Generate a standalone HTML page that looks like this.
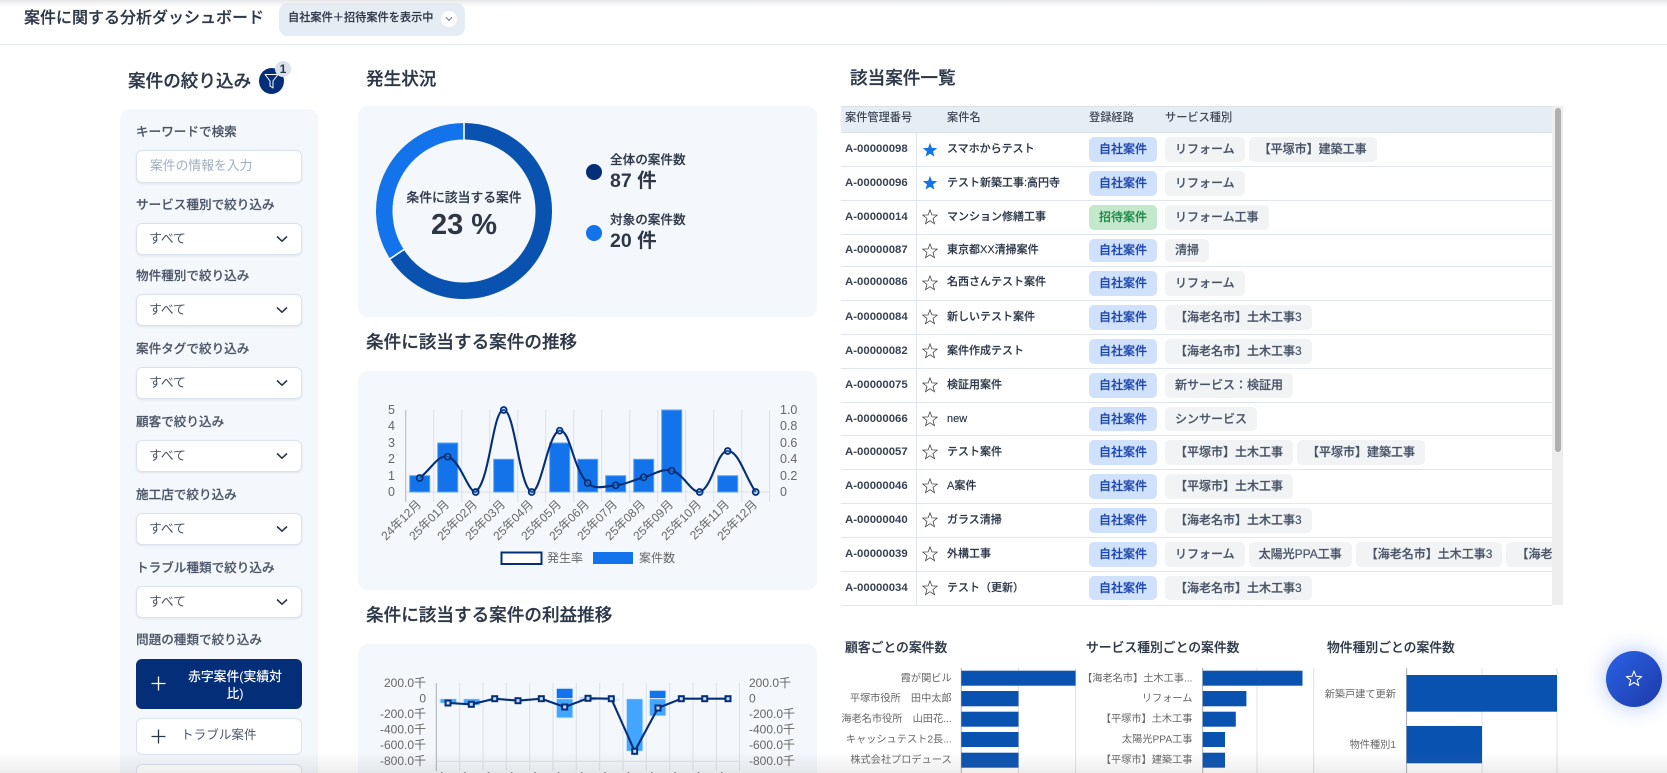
<!DOCTYPE html>
<html lang="ja"><head><meta charset="utf-8"><title>案件に関する分析ダッシュボード</title>
<style>
*{box-sizing:border-box}
html,body{margin:0;padding:0;background:#fff;width:1667px;height:773px;overflow:hidden}
body{font-family:"Liberation Sans","Noto Sans CJK JP",sans-serif;color:#2d3748}
#w{position:relative;width:1667px;height:773px;overflow:hidden;background:#fff}
.t{position:absolute;white-space:nowrap;line-height:1}
.b{position:absolute}
.h2{font-size:17.6px;font-weight:500;color:#2d3748;-webkit-text-stroke:.25px #2d3748}
.lab{font-size:12.6px;font-weight:500;color:#4a5568;left:136px;-webkit-text-stroke:.15px #4a5568}
.panel{position:absolute;background:#f4f7fb;border-radius:10px}
.sel{position:absolute;left:136px;width:166px;height:32px;background:#fff;border:1px solid #dbe3ee;border-radius:6px;box-shadow:0 1px 2px rgba(0,0,0,.08);font-size:12.8px;color:#4a5568;line-height:30px;padding-left:12px}
.sel svg{position:absolute;left:139px;top:11px}
.row{position:absolute;left:0;width:711px;border-bottom:1.2px solid #dfe6f0}
.id{position:absolute;left:4px;top:11px;font-size:11.4px;font-weight:700;color:#3a4454;line-height:1;white-space:nowrap}
.nm{position:absolute;left:106px;top:11px;font-size:11px;font-weight:500;color:#2d3748;line-height:1;white-space:nowrap;-webkit-text-stroke:.15px #2d3748}
.st{position:absolute;left:81px;top:8px;width:16px;height:16px}
.tags{position:absolute;left:248px;top:4px;display:flex;gap:8px;white-space:nowrap}
.bd{display:block;font-size:12px;padding:0 10px;border-radius:5px;font-weight:500;flex:none;height:25px;line-height:25px}
.self{background:#d0e2fb;color:#1f47ad;-webkit-text-stroke:.2px #1f47ad}
.inv{background:#c3e8cc;color:#1f8a4c;-webkit-text-stroke:.2px #1f8a4c}
.tg{background:#f1f3f5;color:#4a5568;margin-right:-4px;-webkit-text-stroke:.2px #4a5568}
.h23{height:23px;line-height:23px}
.h24{height:24px;line-height:24px}
</style></head><body><div id="w">

<div class="b" style="left:0;top:44px;width:1667px;height:1px;background:#e5eaf0"></div>
<div class="t" style="left:24px;top:11px;font-size:16px;font-weight:500;color:#2d3748;-webkit-text-stroke:.2px #2d3748">案件に関する分析ダッシュボード</div>
<div class="b" style="left:279px;top:3px;width:186px;height:33px;background:#e6ecf3;border-radius:9px"></div>
<div class="t" style="left:288px;top:13px;font-size:11.2px;font-weight:500;color:#2d3748;-webkit-text-stroke:.15px #2d3748">自社案件＋招待案件を表示中</div>
<div class="b" style="left:441px;top:11px;width:16px;height:16px;border-radius:50%;background:#fff"></div>
<svg class="b" style="left:445px;top:16px" width="8" height="6" viewBox="0 0 8 6"><path d="M1 1.2 4 4.4 7 1.2" fill="none" stroke="#718096" stroke-width="1.1"/></svg>

<div class="t h2" style="left:128px;top:73px">案件の絞り込み</div>
<div class="b" style="left:259px;top:68px;width:25px;height:26px;border-radius:50%;background:#042f78"></div>
<svg class="b" style="left:262px;top:73px" width="19" height="17" viewBox="0 0 19 17"><path d="M3 1.5H16L11 8V15L8 13V8Z" fill="none" stroke="#fff" stroke-width="1" stroke-linejoin="round"/></svg>
<div class="b" style="left:275px;top:61px;width:16px;height:16px;border-radius:50%;background:#dbe2ec;text-align:center;font-size:12px;font-weight:700;line-height:16px;color:#2d3748">1</div>
<div class="t h2" style="left:366px;top:71px">発生状況</div>
<div class="t h2" style="left:850px;top:70px">該当案件一覧</div>
<div class="t h2" style="left:366px;top:334px">条件に該当する案件の推移</div>
<div class="t h2" style="left:366px;top:607px">条件に該当する案件の利益推移</div>

<div class="panel" style="left:120px;top:109px;width:198px;height:664px;border-radius:10px 10px 0 0"></div>
<div class="t lab" style="top:126px">キーワードで検索</div>
<div class="sel" style="top:150px;height:33px;color:#a0aec0;padding-left:13px">案件の情報を入力</div>
<div class="t lab" style="top:199px">サービス種別で絞り込み</div>
<div class="sel" style="top:223px">すべて<svg width="12" height="8" viewBox="0 0 12 8"><path d="M1 1.5 6 6.2 11 1.5" fill="none" stroke="#2d3748" stroke-width="1.6"/></svg></div>
<div class="t lab" style="top:270px">物件種別で絞り込み</div>
<div class="sel" style="top:294px">すべて<svg width="12" height="8" viewBox="0 0 12 8"><path d="M1 1.5 6 6.2 11 1.5" fill="none" stroke="#2d3748" stroke-width="1.6"/></svg></div>
<div class="t lab" style="top:343px">案件タグで絞り込み</div>
<div class="sel" style="top:367px">すべて<svg width="12" height="8" viewBox="0 0 12 8"><path d="M1 1.5 6 6.2 11 1.5" fill="none" stroke="#2d3748" stroke-width="1.6"/></svg></div>
<div class="t lab" style="top:416px">顧客で絞り込み</div>
<div class="sel" style="top:440px">すべて<svg width="12" height="8" viewBox="0 0 12 8"><path d="M1 1.5 6 6.2 11 1.5" fill="none" stroke="#2d3748" stroke-width="1.6"/></svg></div>
<div class="t lab" style="top:489px">施工店で絞り込み</div>
<div class="sel" style="top:513px">すべて<svg width="12" height="8" viewBox="0 0 12 8"><path d="M1 1.5 6 6.2 11 1.5" fill="none" stroke="#2d3748" stroke-width="1.6"/></svg></div>
<div class="t lab" style="top:562px">トラブル種類で絞り込み</div>
<div class="sel" style="top:586px">すべて<svg width="12" height="8" viewBox="0 0 12 8"><path d="M1 1.5 6 6.2 11 1.5" fill="none" stroke="#2d3748" stroke-width="1.6"/></svg></div>
<div class="t lab" style="top:634px">問題の種類で絞り込み</div>
<div class="b" style="left:136px;top:659px;width:166px;height:50px;background:#042f78;border-radius:6px"></div>
<div class="t" style="left:177px;top:669px;width:116px;text-align:center;font-size:12.8px;font-weight:500;color:#fff;line-height:16.5px">赤字案件(実績対<br>比)</div>
<svg class="b" style="left:151px;top:676px" width="15" height="15" viewBox="0 0 15 15"><path d="M7.5 .5V14.5M.5 7.5H14.5" stroke="#fff" stroke-width="1.3"/></svg>
<div class="b" style="left:136px;top:718px;width:166px;height:37px;background:#fff;border:1px solid #dbe3ee;border-radius:6px"></div>
<div class="t" style="left:181px;top:729px;font-size:12.6px;color:#4a5568">トラブル案件</div>
<svg class="b" style="left:151px;top:729px" width="15" height="15" viewBox="0 0 15 15"><path d="M7.5 .5V14.5M.5 7.5H14.5" stroke="#2d3748" stroke-width="1.3"/></svg>
<div class="b" style="left:136px;top:764px;width:166px;height:9px;background:#fff;border:1px solid #dbe3ee;border-bottom:0;border-radius:6px 6px 0 0"></div>

<div class="panel" style="left:358px;top:106px;width:459px;height:211px"></div>
<div class="panel" style="left:358px;top:371px;width:459px;height:219px"></div>
<div class="panel" style="left:358px;top:644px;width:459px;height:129px;border-radius:10px 10px 0 0"></div>

<svg class="b" style="left:0;top:0;overflow:hidden" width="1667" height="773" viewBox="0 0 1667 773" font-family="'Liberation Sans','Noto Sans CJK JP',sans-serif">
<!-- donut -->
<path d="M464 131.25A79.75 79.75 0 1 1 397.1 254.4" fill="none" stroke="#0a52b0" stroke-width="16.5"/>
<path d="M397.1 254.4A79.75 79.75 0 0 1 464 131.25" fill="none" stroke="#1273eb" stroke-width="16.5"/>
<path d="M464 121V142M405.5 248.5 389 259.5" stroke="#fff" stroke-width="1.6"/>
<circle cx="594" cy="172" r="8" fill="#042f78"/><circle cx="594" cy="233" r="8" fill="#1273eb"/>

<!-- trend chart -->
<g stroke="#dcdfe3" stroke-width="1">
<path d="M405.7 410V502M433.7 410V502M461.7 410V502M489.7 410V502M517.7 410V502M545.7 410V502M573.7 410V502M601.7 410V502M629.7 410V502M657.7 410V502M685.7 410V502M713.7 410V502M741.7 410V502M769.5 410V502M405.7 492H769.5" fill="none"/>
</g>
<path d="M405.7 410V502" stroke="#b8bcc2"/>
<g fill="#1273eb" stroke="#5aa5f5" stroke-width="1">
<rect x="409.7" y="475.7" width="20" height="16.3"/><rect x="437.7" y="443" width="20" height="49"/>
<rect x="493.7" y="459.3" width="20" height="32.7"/><rect x="549.7" y="443" width="20" height="49"/>
<rect x="577.7" y="459.3" width="20" height="32.7"/><rect x="605.7" y="475.7" width="20" height="16.3"/>
<rect x="633.7" y="459.3" width="20" height="32.7"/><rect x="661.7" y="410" width="20" height="82"/>
<rect x="717.7" y="475.7" width="20" height="16.3"/>
</g>
<path d="M419.7 478C430.9 469.5 437.9 454.25 447.7 456.7C460.3 459.85 468 492 475.7 492C490.4 479.7 492.5 410 503.7 410C514.9 410 519.1 487.3 531.7 492C541.5 492 547.8 432.6 559.7 430.7C570.2 429 572.5 468.2 587.7 483C594.9 490 604.7 486.4 615.7 485.3C627.1 484.1 632.5 480.2 643.7 477.3C654.9 474.4 661.6 468 671.7 470.7C684 473.9 690.4 492 699.7 492C712.8 487.4 716.5 451 727.7 451C738.9 451 744.5 475.6 755.7 492" fill="none" stroke="#042f78" stroke-width="2.1"/>
<g fill="rgba(90,165,245,.35)" stroke="#042f78" stroke-width="1.7">
<circle cx="419.7" cy="478" r="3"/><circle cx="447.7" cy="456.7" r="3"/><circle cx="475.7" cy="492" r="3"/><circle cx="503.7" cy="410" r="3"/><circle cx="531.7" cy="492" r="3"/><circle cx="559.7" cy="430.7" r="3"/><circle cx="587.7" cy="483" r="3"/><circle cx="615.7" cy="485.3" r="3"/><circle cx="643.7" cy="477.3" r="3"/><circle cx="671.7" cy="470.7" r="3"/><circle cx="699.7" cy="492" r="3"/><circle cx="727.7" cy="451" r="3"/><circle cx="755.7" cy="492" r="3"/>
</g>
<g font-size="12.5" fill="#666" text-anchor="end">
<text x="395" y="496">0</text><text x="395" y="480">1</text><text x="395" y="463">2</text><text x="395" y="447">3</text><text x="395" y="430">4</text><text x="395" y="414">5</text>
</g>
<g font-size="12.5" fill="#666">
<text x="780" y="496">0</text><text x="780" y="480">0.2</text><text x="780" y="463">0.4</text><text x="780" y="447">0.6</text><text x="780" y="430">0.8</text><text x="780" y="414">1.0</text>
</g>
<g font-size="12" fill="#666" text-anchor="end">
<text transform="rotate(-45 422 505)" x="422" y="505">24年12月</text>
<text transform="rotate(-45 450 505)" x="450" y="505">25年01月</text>
<text transform="rotate(-45 478 505)" x="478" y="505">25年02月</text>
<text transform="rotate(-45 506 505)" x="506" y="505">25年03月</text>
<text transform="rotate(-45 534 505)" x="534" y="505">25年04月</text>
<text transform="rotate(-45 562 505)" x="562" y="505">25年05月</text>
<text transform="rotate(-45 590 505)" x="590" y="505">25年06月</text>
<text transform="rotate(-45 618 505)" x="618" y="505">25年07月</text>
<text transform="rotate(-45 646 505)" x="646" y="505">25年08月</text>
<text transform="rotate(-45 674 505)" x="674" y="505">25年09月</text>
<text transform="rotate(-45 702 505)" x="702" y="505">25年10月</text>
<text transform="rotate(-45 730 505)" x="730" y="505">25年11月</text>
<text transform="rotate(-45 758 505)" x="758" y="505">25年12月</text>
</g>
<rect x="501.5" y="552.5" width="40" height="11.5" fill="#fff" stroke="#042f78" stroke-width="2"/>
<text x="547" y="562" font-size="12" fill="#666">発生率</text>
<rect x="593" y="552" width="40" height="12" fill="#1273eb"/>
<text x="639" y="562" font-size="12" fill="#666">案件数</text>

<!-- profit chart -->
<path d="M436.3 683V771M459.7 683V771M483 683V771M506.3 683V771M529.7 683V771M553 683V771M576.3 683V771M599.7 683V771M623 683V771M646.3 683V771M669.7 683V771M693 683V771M716.3 683V771M739.5 683V771M436.3 761.3H739.5" stroke="#dcdfe3" fill="none"/>
<path d="M436.3 683V771" stroke="#b0b4ba" fill="none"/>
<g stroke="#dceeff" stroke-width="1">
<rect x="440" y="698.7" width="16.7" height="4.6" fill="#42a5ff"/>
<rect x="463.3" y="698.7" width="16.7" height="6.6" fill="#42a5ff"/>
<rect x="486.7" y="698.7" width="16.7" height=".8" fill="#42a5ff"/>
<rect x="510" y="698.7" width="16.7" height="1.2" fill="#42a5ff"/>
<rect x="556.3" y="688.3" width="16.7" height="10.4" fill="#1273eb"/>
<rect x="556.3" y="698.7" width="16.7" height="19.3" fill="#42a5ff"/>
<rect x="579.3" y="697.3" width="16.7" height="1.4" fill="#1273eb"/>
<rect x="579.3" y="698.7" width="16.7" height="1.6" fill="#42a5ff"/>
<rect x="602.7" y="698.7" width="16.7" height="1.6" fill="#cfe6ff"/>
<rect x="626.3" y="698.7" width="16.7" height="52.6" fill="#42a5ff"/>
<rect x="649.3" y="690.3" width="16.7" height="8.4" fill="#1273eb"/>
<rect x="649.3" y="698.7" width="16.7" height="17.3" fill="#42a5ff"/>
</g>
<path d="M448 703L471.3 704.3L494.7 698.7L518 700.7L541.3 698.7L564.7 707L588 698.3L611.3 698.7L634.7 751.3L658 708L681.3 698.7L704.7 698.7L728 698.7" fill="none" stroke="#042f78" stroke-width="2.1"/>
<g fill="#c8dcf2" stroke="#042f78" stroke-width="2">
<rect x="445.5" y="700.5" width="5" height="5"/><rect x="468.8" y="701.8" width="5" height="5"/><rect x="492.2" y="696.2" width="5" height="5"/><rect x="515.5" y="698.2" width="5" height="5"/><rect x="538.8" y="696.2" width="5" height="5"/><rect x="562.2" y="704.5" width="5" height="5"/><rect x="585.5" y="695.8" width="5" height="5"/><rect x="608.8" y="696.2" width="5" height="5"/><rect x="632.2" y="748.8" width="5" height="5"/><rect x="655.5" y="705.5" width="5" height="5"/><rect x="678.8" y="696.2" width="5" height="5"/><rect x="702.2" y="696.2" width="5" height="5"/><rect x="725.5" y="696.2" width="5" height="5"/>
</g>
<g font-size="12" fill="#666" text-anchor="end">
<text x="426" y="687">200.0千</text><text x="426" y="702.5">0</text><text x="426" y="718">-200.0千</text><text x="426" y="733.5">-400.0千</text><text x="426" y="749">-600.0千</text><text x="426" y="765">-800.0千</text>
</g>
<g font-size="12" fill="#666">
<text x="749" y="687">200.0千</text><text x="749" y="702.5">0</text><text x="749" y="718">-200.0千</text><text x="749" y="733.5">-400.0千</text><text x="749" y="749">-600.0千</text><text x="749" y="765">-800.0千</text>
</g>
<g font-size="12" fill="#666" text-anchor="end">
<text transform="rotate(-45 450 777)" x="450" y="777">24年12月</text>
<text transform="rotate(-45 473.3 777)" x="473.3" y="777">25年01月</text>
<text transform="rotate(-45 496.7 777)" x="496.7" y="777">25年02月</text>
<text transform="rotate(-45 520 777)" x="520" y="777">25年03月</text>
<text transform="rotate(-45 543.3 777)" x="543.3" y="777">25年04月</text>
<text transform="rotate(-45 566.7 777)" x="566.7" y="777">25年05月</text>
<text transform="rotate(-45 590 777)" x="590" y="777">25年06月</text>
<text transform="rotate(-45 613.3 777)" x="613.3" y="777">25年07月</text>
<text transform="rotate(-45 636.7 777)" x="636.7" y="777">25年08月</text>
<text transform="rotate(-45 660 777)" x="660" y="777">25年09月</text>
<text transform="rotate(-45 683.3 777)" x="683.3" y="777">25年10月</text>
<text transform="rotate(-45 706.7 777)" x="706.7" y="777">25年11月</text>
<text transform="rotate(-45 730 777)" x="730" y="777">25年12月</text>
</g>

<!-- bottom bar charts -->
<path d="M1018.5 668V773M1075.6 668V773M1257 668V773M1313.7 668V773M1482 668V773M1557 668V773" stroke="#dde0e4" fill="none"/>
<path d="M961.3 668V773M1202.7 668V773M1406.6 668V773" stroke="#a8acb2" fill="none"/>
<g fill="#0a52b0">
<rect x="961.3" y="670.7" width="114.3" height="15"/><rect x="961.3" y="691" width="57.2" height="15.3"/><rect x="961.3" y="711.7" width="57.2" height="15"/><rect x="961.3" y="732" width="57.2" height="15"/><rect x="961.3" y="752.7" width="57.2" height="15"/>
<rect x="1202.7" y="670.7" width="99.8" height="15"/><rect x="1202.7" y="691" width="43.7" height="15.3"/><rect x="1202.7" y="711.7" width="33.1" height="15"/><rect x="1202.7" y="732" width="22.3" height="15"/><rect x="1202.7" y="752.7" width="22.3" height="15"/>
<rect x="1406.6" y="675" width="150.4" height="36.7"/><rect x="1406.6" y="726" width="75.4" height="37.3"/>
</g>
<g font-size="10.2" fill="#666" text-anchor="end">
<text x="951.7" y="681.5">霞が関ビル</text><text x="951.7" y="701.5">平塚市役所　田中太郎</text><text x="951.7" y="722">海老名市役所　山田花...</text><text x="951.7" y="742.5">キャッシュテスト2長...</text><text x="951.7" y="763">株式会社プロデュース</text>
<text x="1192.5" y="681.5">【海老名市】土木工事...</text><text x="1192.5" y="701.5">リフォーム</text><text x="1192.5" y="722">【平塚市】土木工事</text><text x="1192.5" y="742.5">太陽光PPA工事</text><text x="1192.5" y="763">【平塚市】建築工事</text>
<text x="1396" y="697.5">新築戸建て更新</text><text x="1396" y="748">物件種別1</text>
</g>
</svg>

<div class="t" style="left:464px;top:192px;transform:translateX(-50%);font-size:12.8px;font-weight:500;color:#2d3748;-webkit-text-stroke:.15px #2d3748">条件に該当する案件</div>
<div class="t" style="left:464px;top:211px;transform:translateX(-50%);font-size:29px;font-weight:700;color:#2d3748">23 %</div>
<div class="t" style="left:610px;top:153.5px;font-size:12.6px;font-weight:500;color:#2d3748;-webkit-text-stroke:.15px #2d3748">全体の案件数</div>
<div class="t" style="left:610px;top:172px;font-size:19.5px;font-weight:700;color:#2d3748">87 件</div>
<div class="t" style="left:610px;top:214px;font-size:12.6px;font-weight:500;color:#2d3748;-webkit-text-stroke:.15px #2d3748">対象の案件数</div>
<div class="t" style="left:610px;top:232px;font-size:19.5px;font-weight:700;color:#2d3748">20 件</div>

<!-- table -->
<div class="b" style="left:841px;top:106px;width:711px;height:500px;overflow:hidden">
<div class="b" style="left:0;top:0;width:711px;height:27px;background:#e6edf4;border-top:1px solid #d8e1ea;border-bottom:1px solid #d8e1ea"></div>
<div class="t" style="left:4px;top:7px;font-size:11.2px;font-weight:500;color:#3d4756">案件管理番号</div>
<div class="t" style="left:106px;top:7px;font-size:11.2px;font-weight:500;color:#3d4756">案件名</div>
<div class="t" style="left:248px;top:7px;font-size:11.2px;font-weight:500;color:#3d4756">登録経路</div>
<div class="t" style="left:324px;top:7px;font-size:11.2px;font-weight:500;color:#3d4756">サービス種別</div>
<div class="b" style="left:75px;top:27px;width:1.3px;height:473px;background:#dfe6f0"></div>

<div class="row" style="top:27px;height:33.6px"><div class="id">A-00000098</div><svg class="st" style="top:9px" viewBox="0 0 16 16"><path d="M8 .9 9.88 5.91 15.23 6.15 11.04 9.49 12.47 14.65 8 11.7 3.53 14.65 4.96 9.49 .77 6.15 6.12 5.91Z" fill="#1273eb"/></svg><div class="nm">スマホからテスト</div><div class="tags"><span class="bd self">自社案件</span><span class="bd tg">リフォーム</span><span class="bd tg">【平塚市】建築工事</span></div></div>

<div class="row" style="top:61px;height:34px"><div class="id">A-00000096</div><svg class="st" viewBox="0 0 16 16"><path d="M8 .9 9.88 5.91 15.23 6.15 11.04 9.49 12.47 14.65 8 11.7 3.53 14.65 4.96 9.49 .77 6.15 6.12 5.91Z" fill="#1273eb"/></svg><div class="nm">テスト新築工事:高円寺</div><div class="tags"><span class="bd self">自社案件</span><span class="bd tg">リフォーム</span></div></div>

<div class="row" style="top:95px;height:34px"><div class="id">A-00000014</div><svg class="st" viewBox="0 0 16 16"><path d="M8 .9 9.88 5.91 15.23 6.15 11.04 9.49 12.47 14.65 8 11.7 3.53 14.65 4.96 9.49 .77 6.15 6.12 5.91Z" fill="none" stroke="#444" stroke-width=".8"/></svg><div class="nm">マンション修繕工事</div><div class="tags"><span class="bd inv">招待案件</span><span class="bd tg">リフォーム工事</span></div></div>

<div class="row" style="top:129px;height:32px"><div class="id" style="top:10px">A-00000087</div><svg class="st" viewBox="0 0 16 16"><path d="M8 .9 9.88 5.91 15.23 6.15 11.04 9.49 12.47 14.65 8 11.7 3.53 14.65 4.96 9.49 .77 6.15 6.12 5.91Z" fill="none" stroke="#444" stroke-width=".8"/></svg><div class="nm" style="top:10px">東京都XX清掃案件</div><div class="tags"><span class="bd self h23">自社案件</span><span class="bd tg h23">清掃</span></div></div>

<div class="row" style="top:161px;height:34px"><div class="id" style="top:10px">A-00000086</div><svg class="st" viewBox="0 0 16 16"><path d="M8 .9 9.88 5.91 15.23 6.15 11.04 9.49 12.47 14.65 8 11.7 3.53 14.65 4.96 9.49 .77 6.15 6.12 5.91Z" fill="none" stroke="#444" stroke-width=".8"/></svg><div class="nm" style="top:10px">名西さんテスト案件</div><div class="tags"><span class="bd self">自社案件</span><span class="bd tg">リフォーム</span></div></div>

<div class="row" style="top:195px;height:34px"><div class="id">A-00000084</div><svg class="st" viewBox="0 0 16 16"><path d="M8 .9 9.88 5.91 15.23 6.15 11.04 9.49 12.47 14.65 8 11.7 3.53 14.65 4.96 9.49 .77 6.15 6.12 5.91Z" fill="none" stroke="#444" stroke-width=".8"/></svg><div class="nm">新しいテスト案件</div><div class="tags"><span class="bd self">自社案件</span><span class="bd tg">【海老名市】土木工事3</span></div></div>

<div class="row" style="top:229px;height:34px"><div class="id">A-00000082</div><svg class="st" viewBox="0 0 16 16"><path d="M8 .9 9.88 5.91 15.23 6.15 11.04 9.49 12.47 14.65 8 11.7 3.53 14.65 4.96 9.49 .77 6.15 6.12 5.91Z" fill="none" stroke="#444" stroke-width=".8"/></svg><div class="nm">案件作成テスト</div><div class="tags"><span class="bd self">自社案件</span><span class="bd tg">【海老名市】土木工事3</span></div></div>

<div class="row" style="top:263px;height:34px"><div class="id">A-00000075</div><svg class="st" viewBox="0 0 16 16"><path d="M8 .9 9.88 5.91 15.23 6.15 11.04 9.49 12.47 14.65 8 11.7 3.53 14.65 4.96 9.49 .77 6.15 6.12 5.91Z" fill="none" stroke="#444" stroke-width=".8"/></svg><div class="nm">検証用案件</div><div class="tags"><span class="bd self">自社案件</span><span class="bd tg">新サービス：検証用</span></div></div>

<div class="row" style="top:297px;height:33px"><div class="id">A-00000066</div><svg class="st" viewBox="0 0 16 16"><path d="M8 .9 9.88 5.91 15.23 6.15 11.04 9.49 12.47 14.65 8 11.7 3.53 14.65 4.96 9.49 .77 6.15 6.12 5.91Z" fill="none" stroke="#444" stroke-width=".8"/></svg><div class="nm">new</div><div class="tags"><span class="bd self h24">自社案件</span><span class="bd tg h24">シンサービス</span></div></div>

<div class="row" style="top:330px;height:34px"><div class="id">A-00000057</div><svg class="st" viewBox="0 0 16 16"><path d="M8 .9 9.88 5.91 15.23 6.15 11.04 9.49 12.47 14.65 8 11.7 3.53 14.65 4.96 9.49 .77 6.15 6.12 5.91Z" fill="none" stroke="#444" stroke-width=".8"/></svg><div class="nm">テスト案件</div><div class="tags"><span class="bd self">自社案件</span><span class="bd tg">【平塚市】土木工事</span><span class="bd tg">【平塚市】建築工事</span></div></div>

<div class="row" style="top:364px;height:34px"><div class="id">A-00000046</div><svg class="st" viewBox="0 0 16 16"><path d="M8 .9 9.88 5.91 15.23 6.15 11.04 9.49 12.47 14.65 8 11.7 3.53 14.65 4.96 9.49 .77 6.15 6.12 5.91Z" fill="none" stroke="#444" stroke-width=".8"/></svg><div class="nm">A案件</div><div class="tags"><span class="bd self">自社案件</span><span class="bd tg">【平塚市】土木工事</span></div></div>

<div class="row" style="top:398px;height:34px"><div class="id">A-00000040</div><svg class="st" viewBox="0 0 16 16"><path d="M8 .9 9.88 5.91 15.23 6.15 11.04 9.49 12.47 14.65 8 11.7 3.53 14.65 4.96 9.49 .77 6.15 6.12 5.91Z" fill="none" stroke="#444" stroke-width=".8"/></svg><div class="nm">ガラス清掃</div><div class="tags"><span class="bd self">自社案件</span><span class="bd tg">【海老名市】土木工事3</span></div></div>

<div class="row" style="top:432px;height:34px"><div class="id">A-00000039</div><svg class="st" viewBox="0 0 16 16"><path d="M8 .9 9.88 5.91 15.23 6.15 11.04 9.49 12.47 14.65 8 11.7 3.53 14.65 4.96 9.49 .77 6.15 6.12 5.91Z" fill="none" stroke="#444" stroke-width=".8"/></svg><div class="nm">外構工事</div><div class="tags" style="max-width:463px;overflow:hidden"><span class="bd self">自社案件</span><span class="bd tg">リフォーム</span><span class="bd tg">太陽光PPA工事</span><span class="bd tg">【海老名市】土木工事3</span><span class="bd tg">【海老名市】土木工事3</span></div></div>

<div class="row" style="top:466px;height:33.6px"><div class="id">A-00000034</div><svg class="st" viewBox="0 0 16 16"><path d="M8 .9 9.88 5.91 15.23 6.15 11.04 9.49 12.47 14.65 8 11.7 3.53 14.65 4.96 9.49 .77 6.15 6.12 5.91Z" fill="none" stroke="#444" stroke-width=".8"/></svg><div class="nm">テスト（更新）</div><div class="tags"><span class="bd self h24">自社案件</span><span class="bd tg h24">【海老名市】土木工事3</span></div></div>
</div>
<div class="b" style="left:1552px;top:106px;width:11px;height:499px;background:#eeeeee"></div>
<div class="b" style="left:1555px;top:108px;width:6px;height:344px;background:#b0b0b0;border-radius:3px"></div>

<div class="t" style="left:845px;top:642px;font-size:12.8px;font-weight:500;color:#2d3748;-webkit-text-stroke:.15px #2d3748">顧客ごとの案件数</div>
<div class="t" style="left:1086px;top:642px;font-size:12.8px;font-weight:500;color:#2d3748;-webkit-text-stroke:.15px #2d3748">サービス種別ごとの案件数</div>
<div class="t" style="left:1327px;top:642px;font-size:12.8px;font-weight:500;color:#2d3748;-webkit-text-stroke:.15px #2d3748">物件種別ごとの案件数</div>

<div class="b" style="left:1606px;top:651px;width:56px;height:56px;border-radius:50%;background:linear-gradient(135deg,#2a62e6,#1d3aa8);box-shadow:0 0 22px rgba(60,110,240,.4)"></div>
<svg class="b" style="left:1625px;top:670px" width="18" height="17" viewBox="0 0 16 16"><path d="M8 .9 9.88 5.91 15.23 6.15 11.04 9.49 12.47 14.65 8 11.7 3.53 14.65 4.96 9.49 .77 6.15 6.12 5.91Z" fill="none" stroke="#fff" stroke-width="1" stroke-linejoin="round"/></svg>

<div class="b" style="left:0;top:0;width:1667px;height:7px;background:linear-gradient(#e6e7ea,rgba(255,255,255,0))"></div>
<div class="b" style="left:0;top:752px;width:1667px;height:21px;background:linear-gradient(rgba(120,120,120,0),rgba(120,120,120,.13))"></div>
</div></body></html>
